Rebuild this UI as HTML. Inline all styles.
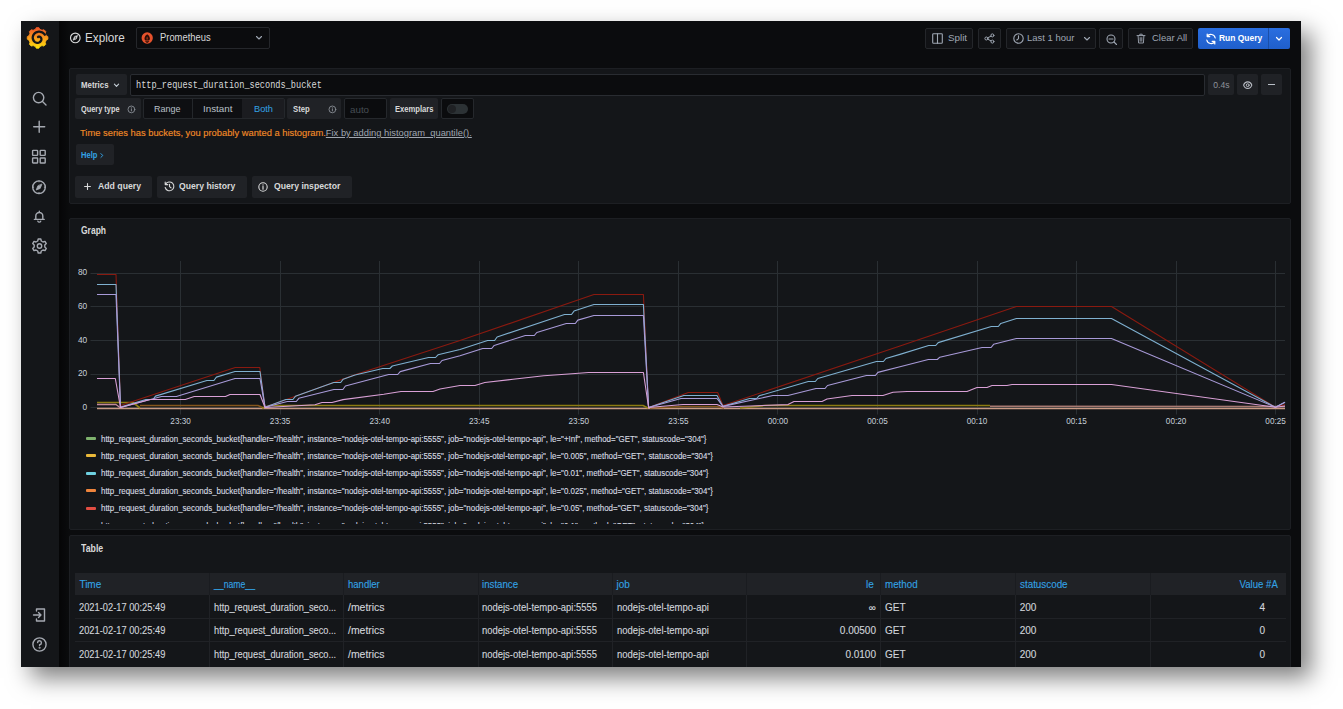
<!DOCTYPE html>
<html><head><meta charset="utf-8">
<style>
*{box-sizing:border-box;margin:0;padding:0}
html,body{width:1343px;height:709px;background:#fff;overflow:hidden;font-family:"Liberation Sans",sans-serif;}
#scr{position:absolute;left:21px;top:21px;width:1280px;height:646px;background:#0b0c0e;box-shadow:10px 11px 22px rgba(0,0,0,.5);overflow:hidden}
.a{position:absolute}
#side{position:absolute;left:0;top:0;width:38px;height:646px;background:#141619}
.ico{position:absolute;fill:none;stroke:#a5a9b1;stroke-width:1.4;stroke-linecap:round;stroke-linejoin:round}
.t{position:absolute;white-space:nowrap;line-height:1;color:#d8d9da}
.btn{position:absolute;background:#111215;border:1px solid #24262a;border-radius:2px}
.panel{position:absolute;background:#141619;border:1px solid #1d1f23;border-radius:2px}
.lab{position:absolute;background:#202226;border-radius:2px}
.ax{font-family:"Liberation Sans",sans-serif;font-size:9.3px;fill:#c7d0d9}
.lg{position:absolute;left:86px;height:12px;white-space:nowrap;font-size:8.6px;line-height:12px;color:#d8dce2;-webkit-text-stroke:.12px #d8dce2}
.lg i{position:absolute;left:0;top:4.5px;width:9.5px;height:3px;border-radius:1px}
.lg span{position:absolute;left:14.9px;top:0;transform:scaleX(.923);transform-origin:0 0}
.th{position:absolute;color:#33a2e5;font-size:10px;line-height:1;white-space:nowrap;-webkit-text-stroke:.1px #33a2e5}
.td{position:absolute;color:#d0d4da;font-size:10px;line-height:1;white-space:nowrap;-webkit-text-stroke:.12px #d0d4da}
#explore{transform:scaleX(0.9320);transform-origin:0 0}
#prom{transform:scaleX(0.9112);transform-origin:0 0}
#split{transform:scaleX(1.0229);transform-origin:0 0}
#last{transform:scaleX(0.9872);transform-origin:0 0}
#clear{transform:scaleX(0.9850);transform-origin:0 0}
#run{transform:scaleX(0.8624);transform-origin:0 0}
#metrics{transform:scaleX(0.9138);transform-origin:0 0}
#query{transform:scaleX(0.8277);transform-origin:0 0}
#qtype{transform:scaleX(0.8573);transform-origin:0 0}
#range{transform:scaleX(0.9212);transform-origin:0 0}
#instant{transform:scaleX(1.0027);transform-origin:0 0}
#both{transform:scaleX(0.9426);transform-origin:0 0}
#step{transform:scaleX(0.8966);transform-origin:0 0}
#exem{transform:scaleX(0.8854);transform-origin:0 0}
#warn{transform:scaleX(0.9836);transform-origin:0 0}
#help{transform:scaleX(0.8805);transform-origin:0 0}
#addq{transform:scaleX(0.9062);transform-origin:0 0}
#qhist{transform:scaleX(0.9008);transform-origin:0 0}
#qinsp{transform:scaleX(0.9024);transform-origin:0 0}
#graph{transform:scaleX(0.7862);transform-origin:0 0}
#table{transform:scaleX(0.8100);transform-origin:0 0}
</style></head><body>
<div id="scr">
  <div id="side">
    <!-- grafana logo -->
    <svg class="a" style="left:3px;top:3px" width="26" height="26" viewBox="0 0 26 26">
      <defs><linearGradient id="lg1" x1="0" y1="1" x2="0" y2="0"><stop offset="0" stop-color="#fde30b"/><stop offset="0.5" stop-color="#f89a1c"/><stop offset="1" stop-color="#f05428"/></linearGradient></defs>
      <path fill="url(#lg1)" d="M11.30 5.30 L12.33 3.58 L14.87 3.58 L15.90 5.30 L18.05 6.19 L20.00 5.70 L21.80 7.50 L21.31 9.45 L22.20 11.60 L23.92 12.63 L23.92 15.17 L22.20 16.20 L21.31 18.35 L21.80 20.30 L20.00 22.10 L18.05 21.61 L15.90 22.50 L14.87 24.22 L12.33 24.22 L11.30 22.50 L9.15 21.61 L7.20 22.10 L5.40 20.30 L5.89 18.35 L5.00 16.20 L3.28 15.17 L3.28 12.63 L5.00 11.60 L5.89 9.45 L5.40 7.50 L7.20 5.70 L9.15 6.19Z" stroke="url(#lg1)" stroke-width="0.8" stroke-linejoin="round"/>
      <path d="M20.88 10.70 L20.28 9.97 L19.59 9.33 L18.84 8.79 L18.04 8.35 L17.21 8.02 L16.35 7.81 L15.48 7.70 L14.62 7.71 L13.77 7.82 L12.97 8.04 L12.20 8.35 L11.49 8.75 L10.85 9.23 L10.29 9.77 L9.80 10.38 L9.41 11.03 L9.10 11.71 L8.89 12.42 L8.77 13.14 L8.74 13.85 L8.80 14.55 L8.95 15.22 L9.18 15.86 L9.48 16.45 L9.85 16.99 L10.27 17.46 L10.75 17.87 L11.26 18.21 L11.80 18.48 L12.36 18.67 L12.92 18.78 L13.49 18.82 L14.04 18.79 L14.57 18.69 L15.07 18.53 L15.54 18.30 L15.96 18.03 L16.33 17.71 L16.65 17.36 L16.92 16.97 L17.13 16.57 L17.27 16.15 L17.36 15.73 L17.40 15.31 L17.37 14.90 L17.30 14.52 L17.18 14.15 L17.02 13.82 L16.82 13.53 L16.59 13.27 L16.34 13.05 L16.06 12.87 L15.78 12.74 L15.50 12.65 L15.22 12.61 L14.94 12.61 L14.68 12.64 L14.44 12.71 L14.22 12.80 L14.02 12.92" fill="none" stroke="#141619" stroke-width="2.3" stroke-linecap="round"/>
    </svg>
    <!-- search -->
    <svg class="ico" style="left:10px;top:69px" width="18" height="18" viewBox="0 0 18 18"><circle cx="7.6" cy="7.6" r="5.2"/><path d="M11.5 11.5 L15 15"/></svg>
    <!-- plus -->
    <svg class="ico" style="left:10px;top:98px" width="18" height="18" viewBox="0 0 18 18"><path d="M8.2 2.2 V13.2 M2.7 7.7 H13.7"/></svg>
    <!-- dashboards -->
    <svg class="ico" style="left:10px;top:128px" width="18" height="18" viewBox="0 0 18 18"><rect x="1.6" y="1.4" width="5" height="5" rx=".6"/><rect x="9.2" y="1.4" width="5" height="5" rx=".6"/><rect x="1.6" y="9" width="5" height="5" rx=".6"/><rect x="9.2" y="9" width="5" height="5" rx=".6"/></svg>
    <!-- explore -->
    <svg class="ico" style="left:10px;top:157px" width="18" height="18" viewBox="0 0 18 18"><circle cx="8" cy="9.2" r="6.3"/><path d="M10.8 6.4 L9.2 10.4 L5.2 12 L6.8 8 Z" fill="#a5a9b1" stroke-width="0.8"/><path d="M8 2.9v1M8 14.5v1M1.7 9.2h1M13.3 9.2h1" stroke-width="1"/></svg>
    <!-- bell -->
    <svg class="ico" style="left:10px;top:187px" width="18" height="18" viewBox="0 0 18 18"><path d="M4.8 10.8 V8 A3.5 3.5 0 0 1 11.8 8 V10.8 M3.4 11.4 H13.2 M6.9 13.2 A1.5 1.5 0 0 0 9.7 13.2 M8.3 3.2 V4.4"/></svg>
    <!-- gear -->
    <svg class="ico" style="left:10px;top:216px" width="18" height="18" viewBox="0 0 18 18"><path d="M7.2 2 H9.8 L10.3 4 L12 5 L14 4.4 L15.3 6.6 L13.8 8 V10 L15.3 11.4 L14 13.6 L12 13 L10.3 14 L9.8 16 H7.2 L6.7 14 L5 13 L3 13.6 L1.7 11.4 L3.2 10 V8 L1.7 6.6 L3 4.4 L5 5 L6.7 4 Z"/><circle cx="8.5" cy="9" r="2.2"/></svg>
    <!-- sign in -->
    <svg class="ico" style="left:10px;top:585px" width="18" height="18" viewBox="0 0 18 18"><path d="M5.5 5 V3 H13.5 V15 H5.5 V13 M2.5 9 H10 M7.5 6.5 L10 9 L7.5 11.5"/></svg>
    <!-- help -->
    <svg class="ico" style="left:10px;top:614px" width="18" height="18" viewBox="0 0 18 18"><circle cx="8.5" cy="9.5" r="6.6"/><path d="M6.6 7.6 A1.9 1.9 0 1 1 8.6 9.6 V10.6"/><circle cx="8.6" cy="12.8" r=".35" fill="#a5a9b1"/></svg>
  </div>

  <div class="a" style="left:38px;top:0;width:12px;height:646px;background:linear-gradient(90deg,rgba(0,0,0,.55),rgba(0,0,0,0))"></div>
  <!-- top bar -->
  <svg class="ico" style="left:48px;top:11px" width="12" height="12" viewBox="0 0 12 12"><circle cx="6.3" cy="5.9" r="4.8" stroke="#d8d9da" stroke-width="1.15"/><path d="M8.6 3.6 L7.3 7 L4 8.2 L5.3 4.8 Z" fill="#d8d9da" stroke="#d8d9da" stroke-width=".5"/><circle cx="6.3" cy="5.9" r=".55" fill="#0b0c0e" stroke="none"/></svg>
  <div class="t" id="explore" style="left:64.2px;top:10.6px;font-size:12.6px;color:#d8d9da">Explore</div>
  <div class="btn" style="left:115px;top:6.4px;width:134px;height:21.4px;background:#0b0c0e;border-color:#25272b"></div>
  <svg class="a" style="left:120px;top:11.2px" width="13" height="13" viewBox="0 0 13 13"><circle cx="6.2" cy="6" r="5.65" fill="#e6522c"/><path d="M6.2 2.2 C7.9 3.6 8.9 5 8.9 6.6 C8.9 7.6 8.5 8.2 8 8.5 H4.4 C3.9 8.2 3.5 7.6 3.5 6.6 C3.5 5 4.5 3.6 6.2 2.2Z" fill="#2a0d06"/><path d="M4.3 9 H8.1 V9.8 H4.3Z M5 10.3 H7.4 L7 11 H5.4Z" fill="#2a0d06"/><path d="M6.2 4.5 C6.9 5.2 7.2 6 7.1 7.6 H5.3 C5.2 6 5.5 5.2 6.2 4.5Z" fill="#8a2a14"/></svg>
  <div class="t" id="prom" style="left:138.7px;top:12.3px;font-size:10.3px;color:#d8d9da">Prometheus</div>
  <svg class="ico" style="left:234px;top:14px" width="8" height="6" viewBox="0 0 8 6"><path d="M1.5 1.5 L4 4 L6.5 1.5" stroke="#9fa7b3" stroke-width="1.1"/></svg>

  <!-- right toolbar -->
  <div class="btn" style="left:904px;top:7px;width:48px;height:21px"></div>
  <svg class="ico" style="left:911px;top:12px" width="11" height="11" viewBox="0 0 11 11"><rect x="0.7" y="0.7" width="9.6" height="9.6" rx=".8" stroke="#9fa7b3" stroke-width="1.1"/><path d="M5.5 .7 V10.3" stroke="#9fa7b3" stroke-width="1.1"/></svg>
  <div class="t" id="split" style="left:926.6px;top:11.8px;font-size:9.6px;color:#9fa7b3">Split</div>
  <div class="btn" style="left:957px;top:7px;width:23px;height:21px"></div>
  <svg class="ico" style="left:963px;top:12px" width="11" height="11" viewBox="0 0 11 11"><circle cx="2.4" cy="5.5" r="1.5" stroke="#9fa7b3" stroke-width="1"/><circle cx="8.4" cy="2.4" r="1.5" stroke="#9fa7b3" stroke-width="1"/><circle cx="8.4" cy="8.6" r="1.5" stroke="#9fa7b3" stroke-width="1"/><path d="M3.7 4.8 L7.1 3.1 M3.7 6.2 L7.1 7.9" stroke="#9fa7b3" stroke-width="1"/></svg>
  <div class="btn" style="left:985.3px;top:7px;width:90px;height:21px"></div>
  <svg class="ico" style="left:991.5px;top:12px" width="11" height="11" viewBox="0 0 11 11"><circle cx="5.5" cy="5.5" r="4.7" stroke="#9fa7b3" stroke-width="1.1"/><path d="M5.5 2.8 V5.6 L3.8 7" stroke="#9fa7b3" stroke-width="1.1"/></svg>
  <div class="t" id="last" style="left:1005.8px;top:11.6px;font-size:9.6px;color:#9fa7b3">Last 1 hour</div>
  <svg class="ico" style="left:1062px;top:14.5px" width="8" height="6" viewBox="0 0 8 6"><path d="M1.5 1.5 L4 4 L6.5 1.5" stroke="#9fa7b3" stroke-width="1.1"/></svg>
  <div class="btn" style="left:1078.4px;top:7px;width:23.4px;height:21px"></div>
  <svg class="ico" style="left:1084.5px;top:12.5px" width="12" height="12" viewBox="0 0 12 12"><circle cx="5" cy="5" r="4" stroke="#9fa7b3" stroke-width="1.1"/><path d="M3 5 H7 M8 8 L10.5 10.5" stroke="#9fa7b3" stroke-width="1.1"/></svg>
  <div class="btn" style="left:1107.3px;top:7px;width:64.4px;height:21px"></div>
  <svg class="ico" style="left:1114.5px;top:12px" width="10" height="11" viewBox="0 0 10 11"><path d="M1 2.6 H9 M3.8 2.6 V1.2 H6.2 V2.6 M2.1 2.6 L2.6 10 H7.4 L7.9 2.6 M4.2 4.6 V8.2 M5.8 4.6 V8.2" stroke="#9fa7b3" stroke-width=".9"/></svg>
  <div class="t" id="clear" style="left:1130.6px;top:11.8px;font-size:9.6px;color:#9fa7b3">Clear All</div>
  <div class="a" style="left:1177.2px;top:6.8px;width:91.5px;height:21.1px;background:linear-gradient(#2a6ee0,#1f5fcb);border-radius:2px"></div>
  <div class="a" style="left:1247.2px;top:6.8px;width:1px;height:21.1px;background:#1b4fa8"></div>
  <svg class="ico" style="left:1183.5px;top:11.5px" width="12" height="12" viewBox="0 0 12 12"><path d="M10.2 5 A4.4 4.4 0 0 0 2.2 3.4 M1.8 7 A4.4 4.4 0 0 0 9.8 8.6 M2.2 1 V3.6 H4.8 M9.8 11 V8.4 H7.2" stroke="#fff" stroke-width="1.2"/></svg>
  <div class="t" id="run" style="left:1197.8px;top:11.6px;font-size:9.8px;color:#fff;font-weight:bold">Run Query</div>
  <svg class="ico" style="left:1254px;top:14.5px" width="8" height="6" viewBox="0 0 8 6"><path d="M1.5 1.5 L4 4 L6.5 1.5" stroke="#fff" stroke-width="1.2"/></svg>

  <!-- query panel -->
  <div class="panel" style="left:48px;top:47.3px;width:1222px;height:135.5px"></div>
  <div class="lab" style="left:54.6px;top:53px;width:51.2px;height:21px"></div>
  <div class="t" id="metrics" style="left:59.8px;top:59.6px;font-size:8.6px;font-weight:bold;color:#d8d9da">Metrics</div>
  <svg class="ico" style="left:92.3px;top:62px" width="7" height="5" viewBox="0 0 7 5"><path d="M1.4 1.2 L3.5 3.3 L5.6 1.2" stroke="#c7d0d9" stroke-width="1.1"/></svg>
  <div class="a" style="left:109.2px;top:53.0px;width:1075px;height:22px;background:#0b0c0e;border:1px solid #292c31;border-radius:2px"></div>
  <div class="t" id="query" style="left:114.8px;top:58.8px;font-family:'Liberation Mono',monospace;font-size:10.4px;color:#d8d9da">http_request_duration_seconds_bucket</div>
  <div class="lab" style="left:1187px;top:53.2px;width:25.8px;height:20.8px"></div>
  <div class="t" style="left:1192.3px;top:59.6px;font-size:8.6px;color:#8e939b">0.4s</div>
  <div class="lab" style="left:1215.8px;top:53.2px;width:21px;height:20.8px"></div>
  <svg class="ico" style="left:1220.5px;top:58.5px" width="12" height="12" viewBox="0 0 12 12"><path d="M1.6 5.2 C3 0.8 8.4 0.8 9.8 5.2 C8.4 9.6 3 9.6 1.6 5.2Z" stroke="#b9bdc5" stroke-width="1.1"/><circle cx="5.7" cy="5.2" r="1.45" stroke="#b9bdc5" stroke-width="1"/></svg>
  <div class="lab" style="left:1239.9px;top:53.2px;width:21.1px;height:20.8px"></div>
  <div class="a" style="left:1246.6px;top:63.2px;width:7.4px;height:1.2px;background:#b8bec6"></div>

  <!-- query type row -->
  <div class="lab" style="left:54.2px;top:77.1px;width:65.6px;height:21.4px"></div>
  <div class="t" id="qtype" style="left:59.7px;top:84px;font-size:8.6px;font-weight:bold;color:#d8d9da">Query type</div>
  <svg class="ico" style="left:105.8px;top:83.8px" width="9" height="9" viewBox="0 0 9 9"><circle cx="4.4" cy="4.4" r="3.4" stroke="#8e939b" stroke-width=".85"/><path d="M4.4 4 V5.9 M4.4 2.8 V2.9" stroke="#8e939b" stroke-width=".9"/></svg>
  <div class="a" style="left:122.4px;top:77.1px;width:141.6px;height:21.4px;border:1px solid #24272b;border-radius:2px;background:#0e0f12"></div>
  <div class="a" style="left:170.6px;top:78.1px;width:1px;height:19.4px;background:#24272b"></div>
  <div class="a" style="left:221.1px;top:78.1px;width:42px;height:19.4px;background:#1b1c20"></div>
  <div class="t" id="range" style="left:133.4px;top:83.3px;font-size:9.8px;color:#b9c0c8">Range</div>
  <div class="t" id="instant" style="left:181.5px;top:83.3px;font-size:9.8px;color:#b9c0c8">Instant</div>
  <div class="t" id="both" style="left:233px;top:83.3px;font-size:9.8px;color:#33a2e5">Both</div>
  <div class="lab" style="left:266.4px;top:77.1px;width:53.6px;height:21.4px"></div>
  <div class="t" id="step" style="left:271.8px;top:84px;font-size:8.6px;font-weight:bold;color:#d8d9da">Step</div>
  <svg class="ico" style="left:306.6px;top:83.8px" width="9" height="9" viewBox="0 0 9 9"><circle cx="4.4" cy="4.4" r="3.4" stroke="#8e939b" stroke-width=".85"/><path d="M4.4 4 V5.9 M4.4 2.8 V2.9" stroke="#8e939b" stroke-width=".9"/></svg>
  <div class="a" style="left:323.0px;top:77.1px;width:42.9px;height:21.4px;background:#0b0c0e;border:1px solid #25282c;border-radius:2px"></div>
  <div class="t" style="left:329px;top:83.6px;font-size:9.8px;color:#464c54">auto</div>
  <div class="lab" style="left:368.8px;top:77.1px;width:47.9px;height:21.4px"></div>
  <div class="t" id="exem" style="left:373.8px;top:84px;font-size:8.6px;font-weight:bold;color:#d8d9da">Exemplars</div>
  <div class="a" style="left:419.5px;top:77.1px;width:33.3px;height:21.4px;background:#0b0c0e;border:1px solid #25282c;border-radius:2px"></div>
  <div class="a" style="left:425.9px;top:83px;width:21.3px;height:9.9px;background:#2c3235;border-radius:5px"></div>
  <div class="a" style="left:427px;top:84px;width:8px;height:8px;background:#1f2124;border-radius:4px"></div>

  <div class="t" id="warn" style="left:58.8px;top:106.9px;font-size:9.5px;color:#f08a28;-webkit-text-stroke:.15px #f08a28">Time series has buckets, you probably wanted a histogram.<span style="color:#a0a7b1;text-decoration:underline;-webkit-text-stroke:0">Fix by adding histogram_quantile().</span></div>
  <div class="lab" style="left:54.5px;top:123px;width:38.2px;height:20.9px"></div>
  <div class="t" id="help" style="left:59.6px;top:130px;font-size:8.6px;font-weight:bold;color:#33a2e5">Help</div>
  <svg class="ico" style="left:78.3px;top:130.6px" width="6" height="7" viewBox="0 0 6 7"><path d="M1.9 1.6 L3.8 3.5 L1.9 5.4" stroke="#33a2e5" stroke-width="1"/></svg>

  <div class="lab" style="left:54.4px;top:155px;width:76.6px;height:21.6px;background:#202226"></div>
  <svg class="ico" style="left:61.5px;top:160.5px" width="9" height="9" viewBox="0 0 9 9"><path d="M4.5 1.6 V7.4 M1.6 4.5 H7.4" stroke="#d8d9da" stroke-width="1.1"/></svg>
  <div class="t" id="addq" style="left:76.6px;top:160.1px;font-size:9.6px;font-weight:bold;color:#d8d9da">Add query</div>
  <div class="lab" style="left:136px;top:155px;width:89.7px;height:21.6px"></div>
  <svg class="ico" style="left:142.5px;top:160px" width="11" height="11" viewBox="0 0 11 11"><path d="M1.6 3.2 A4.4 4.4 0 1 1 1.2 6.5 M1.2 1 V3.6 H3.8 M5.5 3.2 V5.6 L7 6.8" stroke="#d8d9da" stroke-width="1.1"/></svg>
  <div class="t" id="qhist" style="left:158px;top:160.1px;font-size:9.6px;font-weight:bold;color:#d8d9da">Query history</div>
  <div class="lab" style="left:230.9px;top:155px;width:100px;height:21.6px"></div>
  <svg class="ico" style="left:237px;top:160.5px" width="10" height="10" viewBox="0 0 10 10"><circle cx="5" cy="5" r="4.2" stroke="#d8d9da" stroke-width="1.1"/><path d="M5 4.4 V7.2 M5 2.8 V2.9" stroke="#d8d9da" stroke-width="1.2"/></svg>
  <div class="t" id="qinsp" style="left:253px;top:160.1px;font-size:9.6px;font-weight:bold;color:#d8d9da">Query inspector</div>

  <!-- graph panel -->
  <div class="panel" style="left:48px;top:196.8px;width:1222px;height:312.2px"></div>
  <div class="t" id="graph" style="left:60px;top:204.4px;font-size:10.8px;font-weight:bold;color:#d8d9da">Graph</div>
  <svg class="a" style="left:-21px;top:-21px" width="1343" height="709" viewBox="0 0 1343 709">
<line x1="90.5" y1="273.5" x2="1285" y2="273.5" stroke="#2a2f33" stroke-width="1"/>
<text transform="translate(87.2,275.3) scale(0.9,1)" text-anchor="end" class="ax">80</text>
<line x1="90.5" y1="306.5" x2="1285" y2="306.5" stroke="#2a2f33" stroke-width="1"/>
<text transform="translate(87.2,308.9) scale(0.9,1)" text-anchor="end" class="ax">60</text>
<line x1="90.5" y1="340.5" x2="1285" y2="340.5" stroke="#2a2f33" stroke-width="1"/>
<text transform="translate(87.2,342.6) scale(0.9,1)" text-anchor="end" class="ax">40</text>
<line x1="90.5" y1="374.5" x2="1285" y2="374.5" stroke="#2a2f33" stroke-width="1"/>
<text transform="translate(87.2,376.3) scale(0.9,1)" text-anchor="end" class="ax">20</text>
<line x1="90.5" y1="407.5" x2="1285" y2="407.5" stroke="#2a2f33" stroke-width="1"/>
<text transform="translate(87.2,409.9) scale(0.9,1)" text-anchor="end" class="ax">0</text>
<line x1="180.5" y1="261" x2="180.5" y2="414.5" stroke="#2a2f33" stroke-width="1"/>
<text transform="translate(180.6,424.1) scale(0.88,1)" text-anchor="middle" class="ax">23:30</text>
<line x1="280.5" y1="261" x2="280.5" y2="414.5" stroke="#2a2f33" stroke-width="1"/>
<text transform="translate(280.1,424.1) scale(0.88,1)" text-anchor="middle" class="ax">23:35</text>
<line x1="379.5" y1="261" x2="379.5" y2="414.5" stroke="#2a2f33" stroke-width="1"/>
<text transform="translate(379.7,424.1) scale(0.88,1)" text-anchor="middle" class="ax">23:40</text>
<line x1="479.5" y1="261" x2="479.5" y2="414.5" stroke="#2a2f33" stroke-width="1"/>
<text transform="translate(479.2,424.1) scale(0.88,1)" text-anchor="middle" class="ax">23:45</text>
<line x1="578.5" y1="261" x2="578.5" y2="414.5" stroke="#2a2f33" stroke-width="1"/>
<text transform="translate(578.8,424.1) scale(0.88,1)" text-anchor="middle" class="ax">23:50</text>
<line x1="678.5" y1="261" x2="678.5" y2="414.5" stroke="#2a2f33" stroke-width="1"/>
<text transform="translate(678.4,424.1) scale(0.88,1)" text-anchor="middle" class="ax">23:55</text>
<line x1="777.5" y1="261" x2="777.5" y2="414.5" stroke="#2a2f33" stroke-width="1"/>
<text transform="translate(777.9,424.1) scale(0.88,1)" text-anchor="middle" class="ax">00:00</text>
<line x1="877.5" y1="261" x2="877.5" y2="414.5" stroke="#2a2f33" stroke-width="1"/>
<text transform="translate(877.5,424.1) scale(0.88,1)" text-anchor="middle" class="ax">00:05</text>
<line x1="977.5" y1="261" x2="977.5" y2="414.5" stroke="#2a2f33" stroke-width="1"/>
<text transform="translate(977.0,424.1) scale(0.88,1)" text-anchor="middle" class="ax">00:10</text>
<line x1="1076.5" y1="261" x2="1076.5" y2="414.5" stroke="#2a2f33" stroke-width="1"/>
<text transform="translate(1076.5,424.1) scale(0.88,1)" text-anchor="middle" class="ax">00:15</text>
<line x1="1176.5" y1="261" x2="1176.5" y2="414.5" stroke="#2a2f33" stroke-width="1"/>
<text transform="translate(1176.1,424.1) scale(0.88,1)" text-anchor="middle" class="ax">00:20</text>
<line x1="1275.5" y1="261" x2="1275.5" y2="414.5" stroke="#2a2f33" stroke-width="1"/>
<text transform="translate(1275.6,424.1) scale(0.88,1)" text-anchor="middle" class="ax">00:25</text>
<polyline points="97.0,408.5 1285.0,408.5" fill="none" stroke="#c99a84" stroke-width="1.3" stroke-linejoin="round"/>
<polyline points="140.0,405.5 258.0,405.5 264.0,408.0" fill="none" stroke="#85561c" stroke-width="1.4" stroke-linejoin="round"/>
<polyline points="650.0,408.0 683.0,406.5 717.0,406.5 724.0,408.0" fill="none" stroke="#85561c" stroke-width="1.4" stroke-linejoin="round"/>
<polyline points="97.0,402.5 133.0,402.5 140.0,408.0" fill="none" stroke="#8c7c12" stroke-width="1.6" stroke-linejoin="round"/>
<polyline points="262.0,408.0 270.0,405.5 643.0,405.5 648.0,408.0" fill="none" stroke="#8c7c12" stroke-width="1.6" stroke-linejoin="round"/>
<polyline points="740.0,408.0 765.0,405.5 990.0,405.5" fill="none" stroke="#8c7c12" stroke-width="1.6" stroke-linejoin="round"/>
<polyline points="990.0,406.2 1275.0,406.5 1285.0,406.5" fill="none" stroke="#a87a72" stroke-width="1.6" stroke-linejoin="round"/>
<polyline points="97.0,404.5 116.0,404.5 120.5,408.1" fill="none" stroke="#c48a9c" stroke-width="1.3" stroke-linejoin="round"/>
<polyline points="97.0,274.5 116.0,274.5 120.5,405.5 235.2,367.5 259.8,367.5 265.0,407.2 355.0,374.7 460.0,340.6 593.9,294.5 643.4,294.5 648.6,407.5 688.3,392.5 717.7,392.5 723.0,405.5 900.0,346.0 1016.4,306.5 1111.5,306.5 1275.4,407.2 1285.0,404.5" fill="none" stroke="#8a1a10" stroke-width="1.1" stroke-linejoin="round"/>
<polyline points="97.0,284.5 116.0,284.5 120.5,407.0 146.0,399.5 153.0,399.5 155.5,396.1 206.9,380.5 213.9,380.5 216.4,377.1 235.0,371.5 260.0,371.5 265.0,407.2 285.9,399.5 292.9,399.5 295.4,396.3 333.7,382.5 340.7,382.5 343.2,379.2 355.0,375.0 382.8,368.5 389.8,368.5 392.3,366.0 428.5,357.5 435.5,357.5 438.0,354.8 460.0,349.5 487.6,340.5 494.6,340.5 497.1,337.0 564.5,314.5 571.5,314.5 574.0,311.1 593.9,304.5 643.4,304.5 648.6,407.5 683.8,395.5 717.0,395.5 723.0,406.4 749.6,398.5 756.6,398.5 759.1,395.8 808.3,381.5 815.3,381.5 817.8,378.5 876.4,361.5 883.4,361.5 885.9,358.5 900.0,354.4 928.7,345.5 935.7,345.5 938.2,342.6 991.3,326.5 998.3,326.5 1000.8,323.4 1016.4,318.5 1111.5,318.5 1275.4,407.2 1285.0,402.3" fill="none" stroke="#7fb0d0" stroke-width="1.1" stroke-linejoin="round"/>
<polyline points="97.0,294.5 116.0,294.5 120.5,407.5 161.5,396.5 176.4,396.5 235.0,378.5 260.0,378.5 265.0,407.2 287.3,401.5 296.3,401.5 298.8,398.3 333.9,389.5 342.9,389.5 345.4,386.0 388.7,374.5 397.7,374.5 400.2,371.6 430.5,363.5 439.5,363.5 442.0,360.5 460.0,355.8 482.7,348.5 491.7,348.5 494.2,345.4 525.3,335.5 534.3,335.5 536.8,332.5 566.3,323.5 575.3,323.5 577.8,320.1 593.9,315.5 643.4,315.5 648.6,407.5 681.0,398.5 717.0,398.5 723.0,406.4 772.9,395.5 787.9,395.5 816.0,388.5 825.0,388.5 827.5,385.5 866.4,375.5 875.4,375.5 877.9,372.4 900.0,366.7 928.3,359.5 937.3,359.5 939.8,357.2 982.1,347.5 991.1,347.5 993.6,344.3 1016.4,338.5 1111.5,338.5 1275.4,407.2 1285.0,402.3" fill="none" stroke="#a89ad8" stroke-width="1.1" stroke-linejoin="round"/>
<polyline points="97.0,378.5 115.3,378.5 120.5,407.5 150.0,399.5 185.3,399.5 194.2,396.5 225.5,396.5 230.0,394.5 260.0,394.5 265.0,407.5 315.0,404.8 322.0,402.5 332.0,402.5 343.0,399.6 383.8,394.3 401.0,391.5 433.0,391.5 440.0,389.0 460.0,385.5 475.0,385.5 484.8,382.5 513.0,379.3 543.8,375.8 568.6,374.0 588.6,372.5 643.4,372.5 648.6,407.5 683.0,404.5 717.0,404.5 723.0,407.0 788.0,404.6 794.0,401.5 822.0,401.5 827.0,399.0 852.0,395.5 883.0,395.5 893.0,392.3 907.0,391.5 967.0,391.5 977.0,387.5 987.0,387.5 992.0,385.5 1007.0,385.5 1012.0,384.5 1111.5,384.5 1275.4,407.2 1285.0,406.0" fill="none" stroke="#d9a0d6" stroke-width="1.1" stroke-linejoin="round"/>
  </svg>
  <div class="a" style="left:-21px;top:-21px;width:1343px;height:524px;overflow:hidden">
<div class="lg" style="top:432.5px"><i style="background:#7eb26d"></i><span>http_request_duration_seconds_bucket{handler="/health", instance="nodejs-otel-tempo-api:5555", job="nodejs-otel-tempo-api", le="+Inf", method="GET", statuscode="304"}</span></div>
<div class="lg" style="top:449.9px"><i style="background:#eab839"></i><span>http_request_duration_seconds_bucket{handler="/health", instance="nodejs-otel-tempo-api:5555", job="nodejs-otel-tempo-api", le="0.005", method="GET", statuscode="304"}</span></div>
<div class="lg" style="top:467.4px"><i style="background:#6ed0e0"></i><span>http_request_duration_seconds_bucket{handler="/health", instance="nodejs-otel-tempo-api:5555", job="nodejs-otel-tempo-api", le="0.01", method="GET", statuscode="304"}</span></div>
<div class="lg" style="top:484.9px"><i style="background:#ef843c"></i><span>http_request_duration_seconds_bucket{handler="/health", instance="nodejs-otel-tempo-api:5555", job="nodejs-otel-tempo-api", le="0.025", method="GET", statuscode="304"}</span></div>
<div class="lg" style="top:502.3px"><i style="background:#e24d42"></i><span>http_request_duration_seconds_bucket{handler="/health", instance="nodejs-otel-tempo-api:5555", job="nodejs-otel-tempo-api", le="0.05", method="GET", statuscode="304"}</span></div>
<div class="lg" style="top:519.8px"><i style="background:#1f78c1"></i><span>http_request_duration_seconds_bucket{handler="/health", instance="nodejs-otel-tempo-api:5555", job="nodejs-otel-tempo-api", le="0.1", method="GET", statuscode="304"}</span></div>
  </div>

  <!-- table panel -->
  <div class="panel" style="left:48px;top:513.9px;width:1222px;height:200px"></div>
  <div class="t" id="table" style="left:60.3px;top:521.6px;font-size:10.8px;font-weight:bold;color:#d8d9da">Table</div>
  <div class="a" style="left:54.3px;top:551.8px;width:1210.3px;height:21.9px;background:#202226"></div>
  <div class="a" style="left:-21px;top:-21px;width:1343px;height:709px">
<div class="th" style="left:79.4px;top:579.9px">Time</div>
<div class="th" style="left:213.8px;top:579.9px;transform:scaleX(0.867);transform-origin:0 0">__name__</div>
<div class="th" style="left:347.9px;top:579.9px;transform:scaleX(0.953);transform-origin:0 0">handler</div>
<div class="th" style="left:482px;top:579.9px;transform:scaleX(0.969);transform-origin:0 0">instance</div>
<div class="th" style="left:616.5px;top:579.9px">job</div>
<div class="th" style="right:469.29999999999995px;top:579.9px">le</div>
<div class="th" style="left:885px;top:579.9px;transform:scaleX(0.977);transform-origin:0 0">method</div>
<div class="th" style="left:1019.7px;top:579.9px;transform:scaleX(0.984);transform-origin:0 0">statuscode</div>
<div class="th" style="right:65.29999999999995px;top:579.9px;transform:scaleX(0.961);transform-origin:100% 0">Value #A</div>
<div class="td" style="left:79.4px;top:602.6999999999999px;transform:scaleX(0.93);transform-origin:0 0">2021-02-17 00:25:49</div>
<div class="td" style="left:213.8px;top:602.6999999999999px;transform:scaleX(0.923);transform-origin:0 0">http_request_duration_seco...</div>
<div class="td" style="left:347.9px;top:602.6999999999999px;transform:scaleX(1.043);transform-origin:0 0">/metrics</div>
<div class="td" style="left:482px;top:602.6999999999999px;transform:scaleX(0.945);transform-origin:0 0">nodejs-otel-tempo-api:5555</div>
<div class="td" style="left:616.5px;top:602.6999999999999px;transform:scaleX(0.951);transform-origin:0 0">nodejs-otel-tempo-api</div>
<div class="td" style="right:467px;top:602.6999999999999px">&#8734;</div>
<div class="td" style="left:885px;top:602.6999999999999px">GET</div>
<div class="td" style="left:1019.7px;top:602.6999999999999px">200</div>
<div class="td" style="right:78px;top:602.6999999999999px">4</div>
<div class="td" style="left:79.4px;top:626.1px;transform:scaleX(0.93);transform-origin:0 0">2021-02-17 00:25:49</div>
<div class="td" style="left:213.8px;top:626.1px;transform:scaleX(0.923);transform-origin:0 0">http_request_duration_seco...</div>
<div class="td" style="left:347.9px;top:626.1px;transform:scaleX(1.043);transform-origin:0 0">/metrics</div>
<div class="td" style="left:482px;top:626.1px;transform:scaleX(0.945);transform-origin:0 0">nodejs-otel-tempo-api:5555</div>
<div class="td" style="left:616.5px;top:626.1px;transform:scaleX(0.951);transform-origin:0 0">nodejs-otel-tempo-api</div>
<div class="td" style="right:467px;top:626.1px">0.00500</div>
<div class="td" style="left:885px;top:626.1px">GET</div>
<div class="td" style="left:1019.7px;top:626.1px">200</div>
<div class="td" style="right:78px;top:626.1px">0</div>
<div class="td" style="left:79.4px;top:649.6px;transform:scaleX(0.93);transform-origin:0 0">2021-02-17 00:25:49</div>
<div class="td" style="left:213.8px;top:649.6px;transform:scaleX(0.923);transform-origin:0 0">http_request_duration_seco...</div>
<div class="td" style="left:347.9px;top:649.6px;transform:scaleX(1.043);transform-origin:0 0">/metrics</div>
<div class="td" style="left:482px;top:649.6px;transform:scaleX(0.945);transform-origin:0 0">nodejs-otel-tempo-api:5555</div>
<div class="td" style="left:616.5px;top:649.6px;transform:scaleX(0.951);transform-origin:0 0">nodejs-otel-tempo-api</div>
<div class="td" style="right:467px;top:649.6px">0.0100</div>
<div class="td" style="left:885px;top:649.6px">GET</div>
<div class="td" style="left:1019.7px;top:649.6px">200</div>
<div class="td" style="right:78px;top:649.6px">0</div>
<div class="a" style="left:75.3px;top:617.9px;width:1210.3px;height:1px;background:#202226"></div>
<div class="a" style="left:75.3px;top:641.2px;width:1210.3px;height:1px;background:#202226"></div>
<div class="a" style="left:208.9px;top:594.7px;width:1px;height:80px;background:#202226"></div>
<div class="a" style="left:208.9px;top:572.8px;width:1px;height:21.9px;background:#1a1c20"></div>
<div class="a" style="left:342.9px;top:594.7px;width:1px;height:80px;background:#202226"></div>
<div class="a" style="left:342.9px;top:572.8px;width:1px;height:21.9px;background:#1a1c20"></div>
<div class="a" style="left:477.8px;top:594.7px;width:1px;height:80px;background:#202226"></div>
<div class="a" style="left:477.8px;top:572.8px;width:1px;height:21.9px;background:#1a1c20"></div>
<div class="a" style="left:611.5px;top:594.7px;width:1px;height:80px;background:#202226"></div>
<div class="a" style="left:611.5px;top:572.8px;width:1px;height:21.9px;background:#1a1c20"></div>
<div class="a" style="left:746.3px;top:594.7px;width:1px;height:80px;background:#202226"></div>
<div class="a" style="left:746.3px;top:572.8px;width:1px;height:21.9px;background:#1a1c20"></div>
<div class="a" style="left:880.2px;top:594.7px;width:1px;height:80px;background:#202226"></div>
<div class="a" style="left:880.2px;top:572.8px;width:1px;height:21.9px;background:#1a1c20"></div>
<div class="a" style="left:1015.0px;top:594.7px;width:1px;height:80px;background:#202226"></div>
<div class="a" style="left:1015.0px;top:572.8px;width:1px;height:21.9px;background:#1a1c20"></div>
<div class="a" style="left:1149.8px;top:594.7px;width:1px;height:80px;background:#202226"></div>
<div class="a" style="left:1149.8px;top:572.8px;width:1px;height:21.9px;background:#1a1c20"></div>
</div>
</div>
</body></html>
